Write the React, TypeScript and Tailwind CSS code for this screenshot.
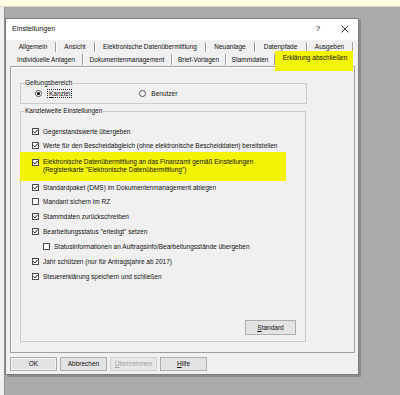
import React from 'react';

const row1 = [
  { label: 'Allgemein', w: 'w-[45px]' },
  { label: 'Ansicht', w: 'w-[39px]' },
  { label: 'Elektronische Datenübermittlung', w: 'w-[111px]' },
  { label: 'Neuanlage', w: 'w-[49px]' },
  { label: 'Datenpfade', w: 'w-[52px]' },
  { label: 'Ausgeben', w: 'w-[46px]' },
];

const row2 = [
  { label: 'Individuelle Anlagen', w: 'w-[73px]' },
  { label: 'Dokumentenmanagement', w: 'w-[89px]' },
  { label: 'Brief-Vorlagen', w: 'w-[54px]' },
  { label: 'Stammdaten', w: 'w-[49px]' },
];

function Box({ checked }: { checked?: boolean }) {
  return (
    <span className="w-[7px] h-[7px] border border-[#4a4a4a] bg-white flex items-center justify-center shrink-0">
      {checked && (
        <svg width="5" height="5" viewBox="0 0 5 5">
          <path d="M0.4 2.4 L1.9 3.9 L4.6 0.7" fill="none" stroke="#111" strokeWidth="1" />
        </svg>
      )}
    </span>
  );
}

function Radio({ checked }: { checked?: boolean }) {
  return (
    <span className="w-[7px] h-[7px] rounded-full border border-[#4a4a4a] bg-white flex items-center justify-center shrink-0">
      {checked && <span className="w-[3px] h-[3px] rounded-full bg-black" />}
    </span>
  );
}

function Check({ label, checked, h = 'h-[15px]', indent }: { label: string; checked?: boolean; h?: string; indent?: boolean }) {
  return (
    <div className={`${h} flex items-center gap-[4px] ${indent ? 'pl-[22px]' : 'pl-[11px]'}`}>
      <Box checked={checked} />
      <span className="whitespace-nowrap">{label}</span>
    </div>
  );
}

function WinButton({ children, className = '' }: { children: React.ReactNode; className?: string }) {
  return (
    <div className={`h-[14px] flex items-center justify-center bg-[#e3e3e3] border border-[#adadad] ${className}`}>
      {children}
    </div>
  );
}

export default function App() {
  return (
    <div className="w-[400px] h-[395px] bg-[#ababab] flex flex-col overflow-hidden font-['Liberation_Sans',Arial,sans-serif] text-[6.5px] leading-[8px] text-[#111]">
      <div className="h-[7px] shrink-0 bg-[#fffde4] border-b border-[#dcdccc]" />
      <div className="flex flex-1">
        <div className="w-[5px] bg-[#f0f0f0] border-r border-[#8f8f8f]" />
        <div className="pt-[11px]">
          <div className="w-[354px] h-[357px] border border-[#7e7e7e] bg-[#f0f0f0] flex flex-col shadow-[2px_2px_0_#8c8c8c]">
            {/* title bar */}
            <div className="h-[21px] bg-white flex items-center pl-[6px] shrink-0">
              <span className="text-[7.2px] -mt-[2px]">Einstellungen</span>
              <span className="ml-auto text-[8px] w-[10px] text-center -mt-[2px]">?</span>
              <span className="ml-[17px] mr-[8px] w-[10px] flex justify-center -mt-[2px]">
                <svg width="8" height="8" viewBox="0 0 8 8">
                  <path d="M0.5 0.5 L7.5 7.5 M7.5 0.5 L0.5 7.5" stroke="#222" strokeWidth="0.9" />
                </svg>
              </span>
            </div>

            {/* body */}
            <div className="flex-1 flex flex-col pl-[4px] pr-[3px] pt-[2px]">
              {/* tabs row 1 */}
              <div className="h-[11px] flex pl-[1px]">
                {row1.map((t) => (
                  <div key={t.label} className={`${t.w} h-[10px] flex items-center justify-center border-r border-[#9c9c9c] shadow-[1px_0_0_#fff] whitespace-nowrap`}>
                    {t.label}
                  </div>
                ))}
              </div>
              {/* tabs row 2 */}
              <div className="h-[12px] flex">
                {row2.map((t) => (
                  <div key={t.label} className={`${t.w} h-[11px] mt-[1px] flex items-center justify-center border-r border-[#9c9c9c] shadow-[1px_0_0_#fff] whitespace-nowrap`}>
                    {t.label}
                  </div>
                ))}
                <div className="w-[78px] h-[20px] -mt-[2px] relative z-10 bg-[#f3f307] flex items-start justify-center pt-[3px] pl-[2px] whitespace-nowrap">
                  Erklärung abschließen
                </div>
              </div>

              {/* tab panel */}
              <div className="h-[287px] mt-[1px] border border-[#a0a0a0] shadow-[inset_1px_1px_0_#fff] flex flex-col pl-[9px]">
                {/* Geltungsbereich */}
                <div className="mt-[16px] w-[287px] h-[21px] border border-[#cbcbcb] relative flex items-center">
                  <span className="absolute -top-[5px] left-[3px] px-[1px] bg-[#f0f0f0]">Geltungsbereich</span>
                  <div className="flex items-center pl-[14px] gap-[5px]">
                    <Radio checked />
                    <span className="border border-dotted border-[#222] px-[1px] leading-[7px]">
                      <span className="underline">K</span>anzlei
                    </span>
                  </div>
                  <div className="flex items-center ml-[67px] gap-[5px]">
                    <Radio />
                    <span>Benutzer</span>
                  </div>
                </div>

                {/* Kanzleiweite Einstellungen */}
                <div className="mt-[7px] w-[286px] h-[231px] border border-[#cbcbcb] relative flex flex-col pt-[12px]">
                  <span className="absolute -top-[5px] left-[3px] px-[1px] bg-[#f0f0f0]">Kanzleiweite Einstellungen</span>
                  <Check label="Gegenstandswerte übergeben" checked />
                  <Check label="Werte für den Bescheidabgleich (ohne elektronische Bescheiddaten) bereitstellen" checked h="h-[13px]" />
                  <div className="h-[29px] w-[266px] -ml-[1px] pl-[12px] bg-[#f3f307] relative z-10 flex items-start gap-[4px] pt-[6px]">
                    <span className="mt-[1px]">
                      <Box checked />
                    </span>
                    <span className="whitespace-nowrap">
                      Elektronische Datenübermittlung an das Finanzamt gemäß Einstellungen
                      <br />
                      (Registerkarte "Elektronische Datenübermittlung")
                    </span>
                  </div>
                  <Check label="Standardpaket (DMS) im Dokumentenmanagement ablegen" checked h="h-[13px]" />
                  <Check label="Mandant sichern im RZ" />
                  <Check label="Stammdaten zurückschreiben" checked />
                  <Check label='Bearbeitungsstatus "erledigt" setzen' checked />
                  <Check label="Statusinformationen an Auftragsinfo/Bearbeitungsstände übergeben" indent />
                  <Check label="Jahr schützen (nur für Antragsjahre ab 2017)" checked />
                  <Check label="Steuererklärung speichern und schließen" checked />
                  <div className="flex-1" />
                  <div className="flex justify-end pr-[9px] pb-[6px]">
                    <WinButton className="w-[51px] h-[15px]">
                      <span><span className="underline">S</span>tandard</span>
                    </WinButton>
                  </div>
                </div>
              </div>

              {/* bottom buttons */}
              <div className="flex gap-[3px] mt-[4px]">
                <WinButton className="w-[47px] border-[#5a5a5a] shadow-[inset_0_0_0_1px_#f4f4f4]">OK</WinButton>
                <WinButton className="w-[47px]">Abbrechen</WinButton>
                <WinButton className="w-[47px] text-[#a0a0a0] border-[#cfcfcf] bg-[#e8e8e8]">
                  <span><span className="underline">Ü</span>bernehmen</span>
                </WinButton>
                <WinButton className="w-[47px]">
                  <span><span className="underline">H</span>ilfe</span>
                </WinButton>
              </div>
            </div>
          </div>
        </div>
      </div>
    </div>
  );
}
